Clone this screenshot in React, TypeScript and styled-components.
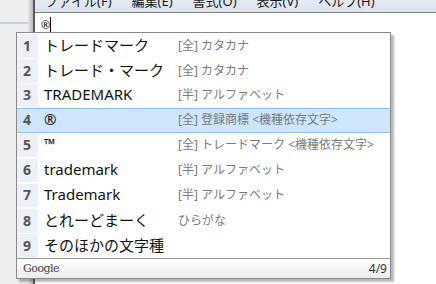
import * as React from "react";
import styled, { createGlobalStyle } from "styled-components";

const Global = createGlobalStyle`
    html, body {
        margin: 0;
        padding: 0;
        background: #ffffff;
    }
`

const Screen = styled.div`
    position: relative;
    width: 436px;
    height: 284px;
    overflow: hidden;
    display: flex;
    font-family: "Noto Sans", "Noto Sans CJK JP", sans-serif;
`

const BackWindow = styled.div`
    width: 28px;
    background: #eceef0;
    display: flex;
    flex-direction: column;
    padding-top: 22px;
    box-sizing: border-box;
`

const BackLine = styled.div`
    height: 2px;
    background: #c3cfdc;
`

const ShadowEdge = styled.div`
    width: 5px;
    background: linear-gradient(to right, #e6e6e6, #b8b8b8);
`

const Window = styled.div`
    flex: 1;
    display: flex;
    flex-direction: column;
    border-left: 2px solid #5a5a5a;
`

const MenuBar = styled.div`
    height: 12px;
    background: linear-gradient(#e4eaf3, #dbe3ee);
    border-bottom: 1px solid #7c7c7c;
    display: flex;
    gap: 20px;
    padding-left: 10px;
    overflow: hidden;
`

const MenuItem = styled.span`
    font-size: 13px;
    line-height: 13px;
    margin-top: -5px;
    color: #1a1a1a;
    white-space: nowrap;
`

const Editor = styled.div`
    flex: 1;
    background: #ffffff;
    padding: 6px 0 0 6px;
    display: flex;
    align-items: flex-start;
`

const Composing = styled.span`
    font-size: 11px;
    line-height: 12px;
    padding-bottom: 1px;
    border-bottom: 1px solid #000;
    color: #000;
`

const Caret = styled.span`
    width: 1px;
    height: 15px;
    background: #000;
    margin-top: -2px;
`

const Popup = styled.div`
    position: absolute;
    left: 16px;
    top: 32px;
    width: 373px;
    display: flex;
    flex-direction: column;
    background: #ffffff;
    border: 1px solid #8a8a8a;
    box-shadow: 3px 3px 2px rgba(0, 0, 0, 0.28);
`

const Row = styled.div<{ $selected?: boolean }>`
    height: 25px;
    box-sizing: border-box;
    display: grid;
    grid-template-columns: 21px 140px 1fr;
    align-items: center;
    background: ${p => p.$selected ? "#cde6fb" : "transparent"};
    border-top: 1px solid ${p => p.$selected ? "#8fc1ea" : "transparent"};
    border-bottom: 1px solid ${p => p.$selected ? "#8fc1ea" : "transparent"};
`

const Num = styled.span<{ $selected?: boolean }>`
    height: 100%;
    display: flex;
    align-items: center;
    padding: 0 0 2px 6px;
    box-sizing: border-box;
    background: ${p => p.$selected ? "transparent" : "#eef0f8"};
    font-weight: bold;
    font-size: 14px;
    color: #555555;
`

const Word = styled.span`
    padding: 0 0 3px 6px;
    font-size: 15px;
    color: #111111;
    white-space: nowrap;
`

const Desc = styled.span`
    padding-bottom: 3px;
    font-size: 12px;
    color: #7a7a7a;
    white-space: nowrap;
`

const Footer = styled.div`
    height: 20px;
    box-sizing: border-box;
    border-top: 1px solid #9a9a9a;
    background: linear-gradient(#ffffff, #ececec);
    display: flex;
    align-items: center;
    justify-content: space-between;
    padding: 0 3px 1px 6px;
`

const Brand = styled.span`
    font-family: "DejaVu Serif", serif;
    font-size: 11px;
    color: #444444;
    letter-spacing: -0.5px;
`

const Count = styled.span`
    font-size: 12px;
    color: #333333;
`

const candidates = [
    { word: "トレードマーク", desc: "[全] カタカナ" },
    { word: "トレード・マーク", desc: "[全] カタカナ" },
    { word: "TRADEMARK", desc: "[半] アルファベット" },
    { word: "®", desc: "[全] 登録商標 <機種依存文字>" },
    { word: "™", desc: "[全] トレードマーク <機種依存文字>" },
    { word: "trademark", desc: "[半] アルファベット" },
    { word: "Trademark", desc: "[半] アルファベット" },
    { word: "とれーどまーく", desc: "ひらがな" },
    { word: "そのほかの文字種", desc: "" },
]

const menus = ["ファイル(F)", "編集(E)", "書式(O)", "表示(V)", "ヘルプ(H)"]

export default function App() {
    const selected = 3
    return (
        <Screen>
            <Global />
            <BackWindow>
                <BackLine />
            </BackWindow>
            <ShadowEdge />
            <Window>
                <MenuBar>
                    {menus.map(m => <MenuItem key={m}>{m}</MenuItem>)}
                </MenuBar>
                <Editor>
                    <Composing>®</Composing>
                    <Caret />
                </Editor>
            </Window>
            <Popup>
                {candidates.map((c, i) => (
                    <Row key={i} $selected={i === selected}>
                        <Num $selected={i === selected}>{i + 1}</Num>
                        <Word>{c.word}</Word>
                        <Desc>{c.desc}</Desc>
                    </Row>
                ))}
                <Footer>
                    <Brand>Google</Brand>
                    <Count>4/9</Count>
                </Footer>
            </Popup>
        </Screen>
    )
}
